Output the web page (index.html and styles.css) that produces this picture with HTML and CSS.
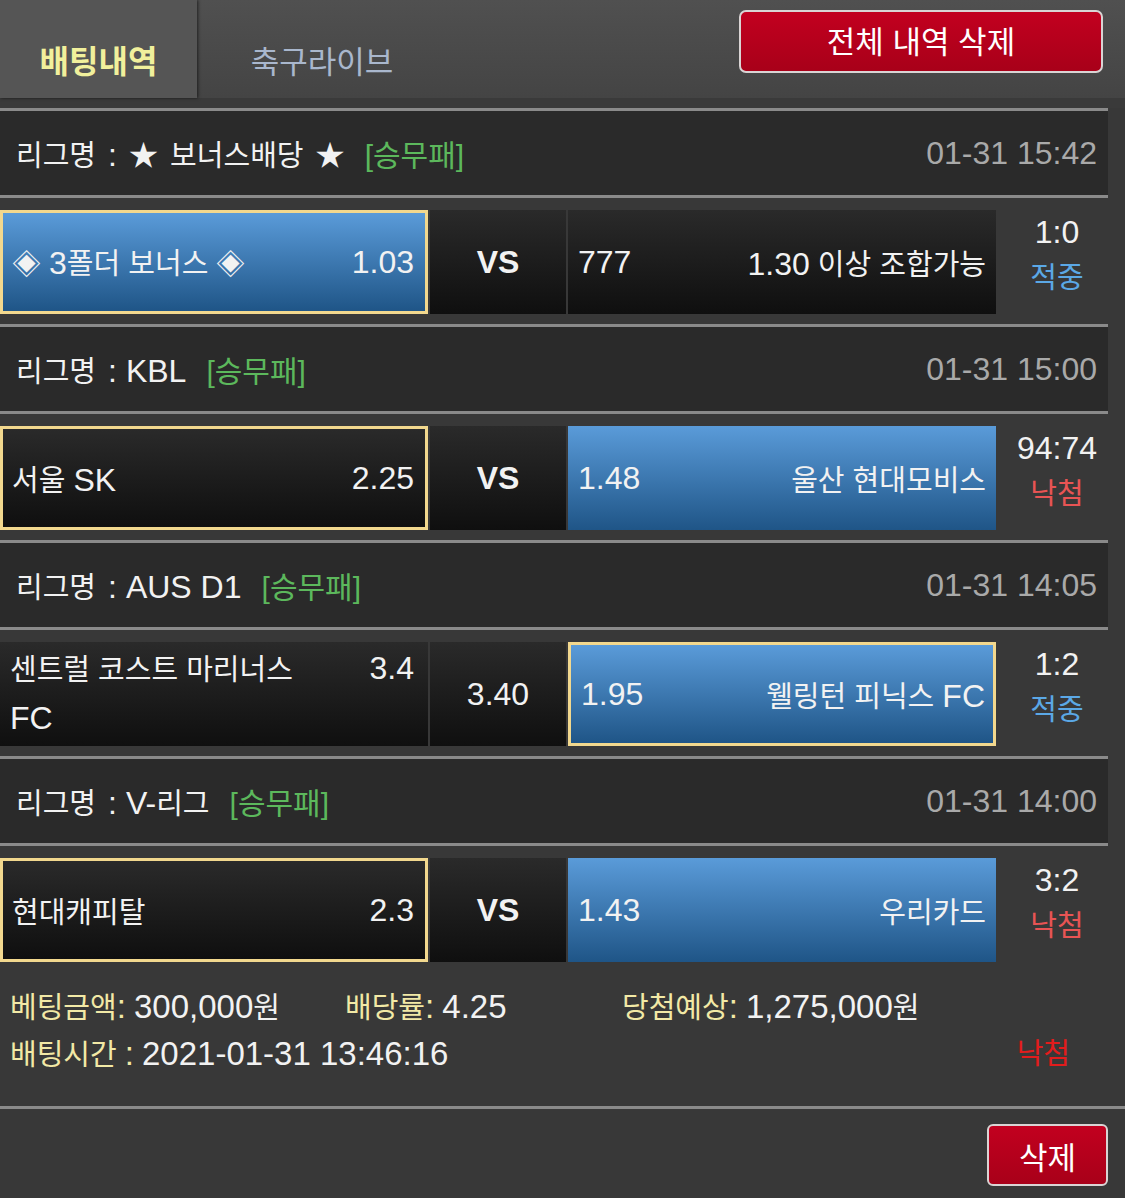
FILE: index.html
```html
<!DOCTYPE html>
<html lang="ko">
<head>
    <meta charset="UTF-8">
    <meta name="viewport" content="width=device-width, initial-scale=1.0">
    <title>배팅내역</title>
    <link rel="stylesheet" href="styles.css">
</head>
<body>
    <div class="header">
        <div class="tabs">
            <div class="tab active">배팅내역</div>
            <div class="tab">축구라이브</div>
        </div>
        <button class="btn-red btn-all">전체 내역 삭제</button>
    </div>

    <div class="bet-list">
        <div class="league">
            <span>리그명 <span class="num">:</span> ★ 보너스배당 ★ <em>[승무패]</em></span>
            <span class="date num">01-31 15:42</span>
        </div>
        <div class="match">
            <div class="team home blue picked"><span class="name">◈ <span class="num">3</span>폴더 보너스 ◈</span><span class="odds num">1.03</span></div>
            <div class="team vs">VS</div>
            <div class="team away"><span class="odds num">777</span><span class="name"><span class="num">1.30</span> 이상 조합가능</span></div>
            <div class="result"><span class="num">1:0</span><span class="hit">적중</span></div>
        </div>

        <div class="league">
            <span>리그명 <span class="num">: KBL</span> <em>[승무패]</em></span>
            <span class="date num">01-31 15:00</span>
        </div>
        <div class="match">
            <div class="team home picked"><span class="name">서울 <span class="num">SK</span></span><span class="odds num">2.25</span></div>
            <div class="team vs">VS</div>
            <div class="team away blue"><span class="odds num">1.48</span><span class="name">울산 현대모비스</span></div>
            <div class="result"><span class="num">94:74</span><span class="miss">낙첨</span></div>
        </div>

        <div class="league">
            <span>리그명 <span class="num">: AUS D1</span> <em>[승무패]</em></span>
            <span class="date num">01-31 14:05</span>
        </div>
        <div class="match">
            <div class="team home"><span class="name wrap">센트럴 코스트 마리너스 <span class="num">FC</span></span><span class="odds num top">3.4</span></div>
            <div class="team vs draw num">3.40</div>
            <div class="team away blue picked"><span class="odds num">1.95</span><span class="name">웰링턴 피닉스 <span class="num">FC</span></span></div>
            <div class="result"><span class="num">1:2</span><span class="hit">적중</span></div>
        </div>

        <div class="league">
            <span>리그명 <span class="num">: V-</span>리그 <em>[승무패]</em></span>
            <span class="date num">01-31 14:00</span>
        </div>
        <div class="match">
            <div class="team home picked"><span class="name">현대캐피탈</span><span class="odds num">2.3</span></div>
            <div class="team vs">VS</div>
            <div class="team away blue"><span class="odds num">1.43</span><span class="name">우리카드</span></div>
            <div class="result"><span class="num">3:2</span><span class="miss">낙첨</span></div>
        </div>
    </div>

    <div class="summary">
        <div class="summary-row">
            <span class="col-amount"><label>베팅금액<span class="num">:</span></label> <span class="num">300,000</span>원</span>
            <span class="col-rate"><label>배당률<span class="num">:</span></label> <span class="num">4.25</span></span>
            <span><label>당첨예상<span class="num">:</span></label> <span class="num">1,275,000</span>원</span>
        </div>
        <div class="summary-row">
            <span><label>배팅시간 <span class="num">:</span></label> <span class="num">2021-01-31 13:46:16</span></span>
            <span class="status">낙첨</span>
        </div>
    </div>

    <div class="footer">
        <button class="btn-red btn-del">삭제</button>
    </div>
</body>
</html>
```

FILE: styles.css
```css
body {
    margin: 0;
    background-color: #383838;
    color: #f2f2f2;
    font-family: "Liberation Sans", "Noto Sans CJK KR", sans-serif;
    font-size: 29px;
}

.num {
    font-size: 32px;
}

.header {
    height: 98px;
    display: flex;
    justify-content: space-between;
    align-items: flex-start;
    padding-right: 22px;
    background: linear-gradient(#505050, #444444);
    border-bottom: 10px solid #3a3a3a;
}

.tabs {
    display: flex;
    height: 100%;
}

.tab {
    width: 250px;
    display: flex;
    justify-content: center;
    align-items: center;
    padding-top: 20px;
    box-sizing: border-box;
    color: #a9b7cd;
    font-size: 31px;
}

.tab.active {
    width: 197px;
    background-color: #555555;
    color: #f1f09c;
    font-weight: bold;
    font-size: 32px;
    box-shadow: 1px 0 3px rgba(0, 0, 0, 0.6);
}

.btn-red {
    font-family: inherit;
    color: white;
    background: linear-gradient(#c2001f, #a80019);
    border: 2px solid #d9d4d4;
    border-radius: 7px;
    font-size: 31px;
    cursor: pointer;
    padding: 0;
}

.btn-all {
    width: 364px;
    height: 63px;
    margin-top: 10px;
    padding-bottom: 4px;
}

.bet-list {
    margin-right: 17px;
}

.league {
    height: 84px;
    border-top: 3px solid #8a8a8a;
    background-color: #2a2a2a;
    display: flex;
    justify-content: space-between;
    align-items: center;
    padding: 0 11px 0 16px;
    word-spacing: 4px;
}

.league .num {
    word-spacing: 0;
}

.league em {
    font-style: normal;
    color: #5cb85c;
    margin-left: 8px;
    font-size: 30px;
}

.league .date {
    color: #a9a9a9;
}

.match {
    border-top: 3px solid #8a8a8a;
    padding: 12px 0 10px;
    display: grid;
    grid-template-columns: 428px 136px 428px 1fr;
    column-gap: 2px;
}

.team {
    height: 104px;
    box-sizing: border-box;
    display: flex;
    justify-content: space-between;
    align-items: center;
    background: linear-gradient(#2a2a2a, #0f0f0f);
    padding: 0 14px 0 12px;
}

.team.away {
    padding: 0 10px 0 10px;
}

.team.blue {
    background: linear-gradient(#5a9bd9, #1f5587);
}

.team.picked {
    border: 3px solid #f2d88e;
    padding-left: 9px;
    padding-right: 11px;
}

.team.away.picked {
    padding-left: 10px;
    padding-right: 8px;
}

.team .name.wrap {
    width: 310px;
    line-height: 48px;
    margin-left: -2px;
}

.team .odds.top {
    align-self: flex-start;
    line-height: 48px;
    margin-top: 2px;
}

.team.vs {
    justify-content: center;
    font-weight: bold;
    font-size: 32px;
    padding: 0;
}

.team.vs.draw {
    font-weight: normal;
}

.result {
    display: flex;
    flex-direction: column;
    align-items: center;
    line-height: 46px;
    margin-top: -1px;
    padding-left: 8px;
}

.hit {
    color: #5ba8e6;
}

.miss {
    color: #e85454;
}

.summary {
    padding: 12px 0 28px 10px;
    border-bottom: 3px solid #8a8a8a;
}

.summary-row {
    display: flex;
    line-height: 46px;
}

.summary .num {
    font-size: 33px;
}

.summary label {
    color: #f2e9a6;
}

.col-amount {
    width: 335px;
}

.col-rate {
    width: 277px;
}

.summary .status {
    margin-left: auto;
    margin-right: 55px;
    color: #e21c1c;
}

.footer {
    display: flex;
    justify-content: flex-end;
    padding: 15px 17px 0 0;
}

.btn-del {
    width: 121px;
    height: 62px;
    border-radius: 6px;
}
```
